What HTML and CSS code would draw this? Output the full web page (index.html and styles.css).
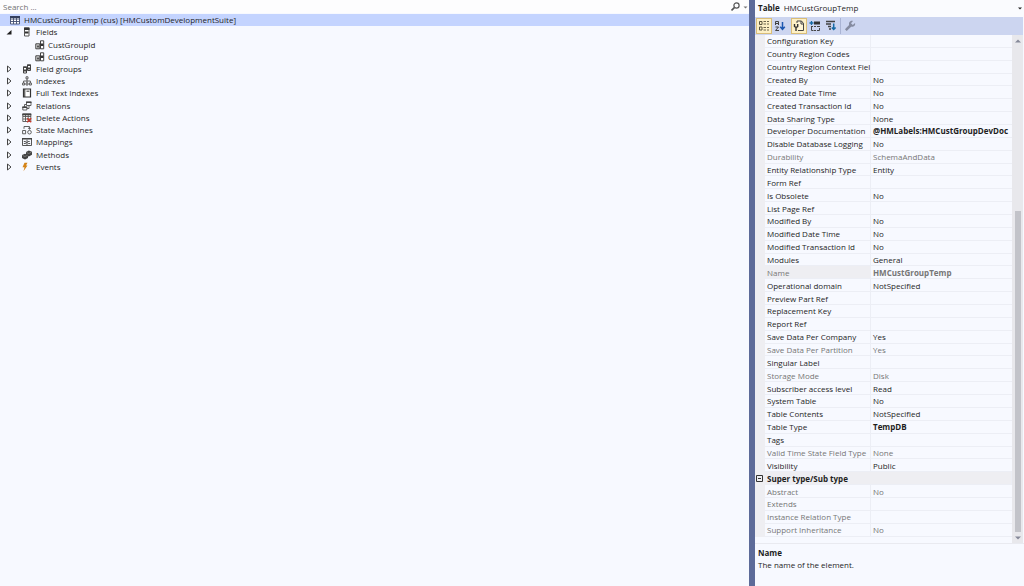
FILE: index.html
```html
<!DOCTYPE html>
<html lang="en">
<head>
<meta charset="utf-8">
<title>HMCustGroupTemp</title>
<link rel="stylesheet" href="styles.css">
</head>
<body>
<svg class="sprite" aria-hidden="true">
  <symbol id="closed" viewBox="0 0 10 12"><path d="M3.500 3v6L7 6z" fill="#fbfcff" stroke="#444" stroke-width="1"/></symbol>
  <symbol id="open" viewBox="0 0 10 12"><path d="M7.500 4v4.500H2.500z" fill="#1e1e1e"/></symbol>
  <symbol id="field" viewBox="0 0 10 10"><path d="M5.500 .8h3.200v8H5.500z" fill="#fff" stroke="#424242"/><path d="M5.500 3.500h3v2.500h-3z" fill="#333"/><path d="M.8 3.800h4v5h-4z" fill="#ddd" stroke="#424242"/><path d="M2 5.500h2v2H2z" fill="#555"/></symbol>
</svg>
<div class="workspace">
  <main class="designer">
    <div class="search">
      <input class="search-input" type="text" placeholder="Search ..." aria-label="Search">
      <button class="search-button" aria-label="Search options">
        <svg class="search-icon" viewBox="0 0 18 12"><circle cx="5.500" cy="4.500" r="2.600" fill="none" stroke="#555" stroke-width="1.200"/><path d="M3.600 6.400L.5 9.500" stroke="#555" stroke-width="1.600"/><path d="M12.500 5.500h4l-2 2z" fill="#777"/></svg>
      </button>
    </div>
    <div class="tree" role="tree" aria-label="Table elements">
      <div class="node root" role="treeitem" aria-level="1" aria-selected="true"><svg class="icon" viewBox="0 0 10 10"><path d="M.5 1.500h9v7.500h-9zM.5 4h9M.5 6.500h9M3.500 2v7M6.500 2v7" fill="#fff" stroke="#424e70" stroke-width=".9"/><path d="M0 1h10v2H0z" fill="#35405e"/></svg>HMCustGroupTemp (cus) [HMCustomDevelopmentSuite]</div>
      <div class="node" role="treeitem" aria-level="2"><button class="toggle" aria-label="Collapse Fields"><svg class="arrow"><use href="#open"/></svg></button><svg class="icon" viewBox="0 0 10 10"><path d="M2.500 1h4.500v8H2.500z" fill="#fff" stroke="#555"/><path d="M2 .5h5.500V3H2zM3 4.500h3.500V6.500H3z" fill="#333"/></svg>Fields</div>
      <div class="node leaf" role="treeitem" aria-level="3"><svg class="icon"><use href="#field"/></svg>CustGroupId</div>
      <div class="node leaf" role="treeitem" aria-level="3"><svg class="icon"><use href="#field"/></svg>CustGroup</div>
      <div class="node" role="treeitem" aria-level="2"><button class="toggle" aria-label="Expand Field groups"><svg class="arrow"><use href="#closed"/></svg></button><svg class="icon" viewBox="0 0 10 10"><path d="M5.500 1h3v5.500h-3zM1.500 3h3v6h-3z" fill="#fff" stroke="#424242"/><path d="M5 .5h4v1.500H5zM5 3.500h3v2H5zM1 2.500h4V4H1zM1.500 5.500h3v2h-3z" fill="#424242"/></svg>Field groups</div>
      <div class="node" role="treeitem" aria-level="2"><button class="toggle" aria-label="Expand Indexes"><svg class="arrow"><use href="#closed"/></svg></button><svg class="icon" viewBox="0 0 10 10"><path d="M4 .8h2v2H4zM.6 7h2v2h-2zM4 7h2v2H4zM7.400 7h2v2h-2zM5 3v4M1.600 7V5h6.800v2" fill="none" stroke="#505050" stroke-width=".9"/></svg>Indexes</div>
      <div class="node" role="treeitem" aria-level="2"><button class="toggle" aria-label="Expand Full Text Indexes"><svg class="arrow"><use href="#closed"/></svg></button><svg class="icon" viewBox="0 0 10 10"><path d="M1.500 1h7v8h-7z" fill="#fff" stroke="#333" stroke-width="1.200"/><path d="M2.800 1v8M4.500 3.200h2.800" stroke="#333"/></svg>Full Text Indexes</div>
      <div class="node" role="treeitem" aria-level="2"><button class="toggle" aria-label="Expand Relations"><svg class="arrow"><use href="#closed"/></svg></button><svg class="icon" viewBox="0 0 10 10"><path d="M4.500 1.200h4.500v3.300H4.500zM.8 6h4v3h-4zM2.500 6V3.500h2M7 4.500v3H5" fill="none" stroke="#505050" stroke-width=".9"/><path d="M4 .6h5.500v1.500H4zM.3 5.500h5V7h-5z" fill="#424242"/></svg>Relations</div>
      <div class="node" role="treeitem" aria-level="2"><button class="toggle" aria-label="Expand Delete Actions"><svg class="arrow"><use href="#closed"/></svg></button><svg class="icon" viewBox="0 0 10 10"><path d="M.8 1h8v7.500h-8zM1 3.500h8M1 6h8M3.500 1v7.500M6.200 1v7.500" fill="#fff" stroke="#555" stroke-width=".9"/><path d="M.3.5h9v1.800h-9z" fill="#424242"/><path d="M5.200 5.200l4 4M9.200 5.200l-4 4" stroke="#c8382b" stroke-width="1.300"/></svg>Delete Actions</div>
      <div class="node" role="treeitem" aria-level="2"><button class="toggle" aria-label="Expand State Machines"><svg class="arrow"><use href="#closed"/></svg></button><svg class="icon" viewBox="0 0 10 10"><path d="M.6 5.500h3v3.300h-3zM2 3.800V1.500h5.500v2.500M6 2.800l1.500 1.400L9 2.800" fill="none" stroke="#505050" stroke-width=".9"/><circle cx="7.500" cy="7.200" r="1.800" fill="none" stroke="#505050" stroke-width=".9"/></svg>State Machines</div>
      <div class="node" role="treeitem" aria-level="2"><button class="toggle" aria-label="Expand Mappings"><svg class="arrow"><use href="#closed"/></svg></button><svg class="icon" viewBox="0 0 10 10"><path d="M.5 1.500h9v7h-9zM5 1.500v7M1.800 4.500h2M1.800 6.500h1.500M6.200 4.500h1.500M6.200 6.500h2M3 6.500l3.500-2" fill="none" stroke="#444" stroke-width=".9"/><path d="M0 1h4.500v1.500H0zM5.500 1H10v1.500H5.500z" fill="#424242"/></svg>Mappings</div>
      <div class="node" role="treeitem" aria-level="2"><button class="toggle" aria-label="Expand Methods"><svg class="arrow"><use href="#closed"/></svg></button><svg class="icon" viewBox="0 0 10 10"><path d="M6.800.5L10 1.800v3L6.800 6.500 4 5V2zM3 3.800L6 5v3L3 9.500 0 8V5z" fill="#424242"/><path d="M4.500 2.500l2.300 1L9.500 2M.6 5.500L3 6.500 5.500 5.300" fill="none" stroke="#aaa" stroke-width=".5"/></svg>Methods</div>
      <div class="node" role="treeitem" aria-level="2"><button class="toggle" aria-label="Expand Events"><svg class="arrow"><use href="#closed"/></svg></button><svg class="icon" viewBox="0 0 10 10"><path d="M2.500.8h3L4 3.500h1.500L1.500 9.300l1-4H.5z" fill="#d48316"/></svg>Events</div>
    </div>
  </main>
  <div class="splitter" role="separator" aria-orientation="vertical"></div>
  <aside class="properties">
    <header class="object"><strong>Table</strong><span class="object-name">HMCustGroupTemp</span><button class="object-menu" aria-label="Choose object"><svg class="caret" viewBox="0 0 6 6"><path d="M1 2.500h4l-2 2z" fill="#222"/></svg></button></header>
    <div class="toolbar" role="toolbar" aria-label="Properties">
      <button class="tool active" aria-label="Categorized"><svg class="tool-icon" viewBox="0 0 12 12"><path d="M1.500 1.500h2.500v3H1.500zM1.500 7h2.500v3H1.500z" fill="none" stroke="#5b553f"/><path d="M5.500 1.500H8M9 1.500h2M5.500 4H8M9 4h2M5.500 7.500H8M9 7.500h2M5.500 10H8M9 10h2" stroke="#6b644c"/></svg></button>
      <button class="tool" aria-label="Alphabetical"><svg class="tool-icon" viewBox="0 0 12 12"><path d="M1.500 5V1.500h3V5M1.500 3.500h3M1.500 7h3L1.500 10.500h3.500" fill="none" stroke="#424242"/><path d="M8.500 2v7M6.200 6.800L8.500 9.300l2.300-2.500" fill="none" stroke="#1c57b0" stroke-width="1.500"/></svg></button>
      <button class="tool active spaced" aria-label="Properties"><svg class="tool-icon" viewBox="0 0 12 12"><path d="M4 3V1h4.500L10.500 3.500V10.500H5" fill="#fff5d5" stroke="#424242"/><path d="M8 1v3h3" fill="none" stroke="#424242"/><path d="M1.500 4v2.500l1.500 1L4.700 6.500V4M3 7v4" fill="none" stroke="#333" stroke-width="1.400"/></svg></button>
      <button class="tool" aria-label="Group by"><svg class="tool-icon" viewBox="0 0 12 12"><path d="M5 1.500h6v3H5z" fill="#333"/><path d="M2.500 1v4M.5 3h4" fill="none" stroke="#176aa5" stroke-width="1.300"/><path d="M2 6.500h2M5 6.500h2M8 6.500h3M2.500 7v3.500h2M5 10.500h2M8 10.500h2.500V8" fill="none" stroke="#444"/></svg></button>
      <button class="tool" aria-label="Sort"><svg class="tool-icon" viewBox="0 0 12 12"><path d="M1 1.500h9M1 4h5M3 6.500h3M4 9h2" stroke="#424242" stroke-width="1.300"/><path d="M8.700 3.500v6M6.800 7.500l1.900 2 1.900-2" fill="none" stroke="#176aa5" stroke-width="1.500"/></svg></button>
      <button class="tool wrench" aria-label="Property pages"><svg class="tool-icon" viewBox="0 0 12 12"><path d="M1.800 10.200L6.500 5.500" stroke="#858ba0" stroke-width="2.500"/><path d="M11 3L8.800 5 7 3.300l2-2.300C6 .2 4 3 5.500 5.800 8 8.200 12 6 11 3z" fill="#858ba0"/></svg></button>
    </div>
    <div class="grid-area">
      <div class="grid-body">
      <table class="grid">
        <colgroup><col class="gutter-col"><col class="name-col"><col></colgroup>
        <tbody>
          <tr><td></td><th>Configuration Key</th><td></td></tr>
          <tr><td></td><th>Country Region Codes</th><td></td></tr>
          <tr><td></td><th>Country Region Context Field</th><td></td></tr>
          <tr><td></td><th>Created By</th><td>No</td></tr>
          <tr><td></td><th>Created Date Time</th><td>No</td></tr>
          <tr><td></td><th>Created Transaction Id</th><td>No</td></tr>
          <tr><td></td><th>Data Sharing Type</th><td>None</td></tr>
          <tr class="changed"><td></td><th>Developer Documentation</th><td>@HMLabels:HMCustGroupDevDoc</td></tr>
          <tr><td></td><th>Disable Database Logging</th><td>No</td></tr>
          <tr class="readonly"><td></td><th>Durability</th><td>SchemaAndData</td></tr>
          <tr><td></td><th>Entity Relationship Type</th><td>Entity</td></tr>
          <tr><td></td><th>Form Ref</th><td></td></tr>
          <tr><td></td><th>Is Obsolete</th><td>No</td></tr>
          <tr><td></td><th>List Page Ref</th><td></td></tr>
          <tr><td></td><th>Modified By</th><td>No</td></tr>
          <tr><td></td><th>Modified Date Time</th><td>No</td></tr>
          <tr><td></td><th>Modified Transaction Id</th><td>No</td></tr>
          <tr><td></td><th>Modules</th><td>General</td></tr>
          <tr class="readonly changed selected"><td></td><th>Name</th><td>HMCustGroupTemp</td></tr>
          <tr><td></td><th>Operational domain</th><td>NotSpecified</td></tr>
          <tr><td></td><th>Preview Part Ref</th><td></td></tr>
          <tr><td></td><th>Replacement Key</th><td></td></tr>
          <tr><td></td><th>Report Ref</th><td></td></tr>
          <tr><td></td><th>Save Data Per Company</th><td>Yes</td></tr>
          <tr class="readonly"><td></td><th>Save Data Per Partition</th><td>Yes</td></tr>
          <tr><td></td><th>Singular Label</th><td></td></tr>
          <tr class="readonly"><td></td><th>Storage Mode</th><td>Disk</td></tr>
          <tr><td></td><th>Subscriber access level</th><td>Read</td></tr>
          <tr><td></td><th>System Table</th><td>No</td></tr>
          <tr><td></td><th>Table Contents</th><td>NotSpecified</td></tr>
          <tr class="changed"><td></td><th>Table Type</th><td>TempDB</td></tr>
          <tr><td></td><th>Tags</th><td></td></tr>
          <tr class="readonly"><td></td><th>Valid Time State Field Type</th><td>None</td></tr>
          <tr><td></td><th>Visibility</th><td>Public</td></tr>
          <tr class="category"><td><button class="collapse" aria-label="Collapse Super type/Sub type"><svg class="minus" viewBox="0 0 7 7"><path d="M.5.5h6v6h-6zM2 3.500h3" fill="none" stroke="#333"/></svg></button></td><th colspan="2">Super type/Sub type</th></tr>
          <tr class="readonly"><td></td><th>Abstract</th><td>No</td></tr>
          <tr class="readonly"><td></td><th>Extends</th><td></td></tr>
          <tr class="readonly"><td></td><th>Instance Relation Type</th><td></td></tr>
          <tr class="readonly"><td></td><th>Support Inheritance</th><td>No</td></tr>
        </tbody>
      </table>
      </div>
      <div class="scrollbar">
        <button class="scroll-step" aria-label="Scroll up"><svg class="scroll-arrow" viewBox="0 0 8 8"><path d="M1 5.500h6L4 2.500z" fill="#868999"/></svg></button>
        <div class="track"><div class="thumb"></div></div>
        <button class="scroll-step" aria-label="Scroll down"><svg class="scroll-arrow" viewBox="0 0 8 8"><path d="M1 2.500h6L4 5.500z" fill="#868999"/></svg></button>
      </div>
    </div>
    <footer class="description"><strong>Name</strong><span>The name of the element.</span></footer>
  </aside>
</div>
</body>
</html>
```
FILE: styles.css
```css
* { box-sizing: border-box; }
body { margin: 0; font: 8px/12px "Open Sans", "Noto Sans", sans-serif; color: #1e1e1e; background: #f7f9fe; }
button { border: 0; padding: 0; margin: 0; background: none; font: inherit; color: inherit; display: flex; align-items: center; justify-content: center; }
svg { display: block; flex: none; }
.sprite { position: absolute; width: 0; height: 0; }
.workspace { display: grid; grid-template-columns: minmax(0, 1fr) 6px 269px; min-height: 100vh; }
.designer { background: #f7f9ff; }
.search { display: flex; height: 13px; background: #fdfdfe; }
.search-input { flex: 1; min-width: 0; border: 0; padding: 0 3px; background: none; font: inherit; color: #1e1e1e; outline: 0; }
.search-input::placeholder { color: #717171; opacity: 1; }
.search-icon { width: 18px; height: 12px; }
.tree { display: grid; grid-auto-rows: 1fr; min-height: 160px; padding-top: 1px; }
.node { display: flex; align-items: center; padding-left: 4px; white-space: nowrap; }
.root { padding-left: 10px; background: #c4d4ff; }
.leaf { padding-left: 35px; }
.icon { width: 10px; height: 10px; margin-right: 4px; }
.leaf .icon { margin-right: 3px; }
.toggle { margin-right: 8px; }
.arrow { width: 10px; height: 12px; }
.splitter { background: #5d6b99; }
.properties { display: flex; flex-direction: column; min-width: 0; background: #f7f9ff; }
.object { display: flex; align-items: center; gap: 4px; height: 17px; padding: 0 1px 2px 3px; background: #fafbfe; }
.object-name { flex: 1; }
.caret { width: 6px; height: 6px; }
.toolbar { display: flex; align-items: center; height: 18px; margin-right: 1px; padding: 0 0 1px 1px; background: #ccd5f0; }
.tool { width: 16px; height: 16px; }
.tool.active { background: #fdf0c5; border: 1px solid #d9bd78; }
.tool-icon { width: 12px; height: 12px; }
.spaced { margin-left: 3px; }
.wrench { margin-left: 1px; padding-left: 1px; border-left: 1px solid #aab4d4; width: 18px; }
.grid-area { display: flex; padding-right: 1px; border-bottom: 1px solid #e9eaf0; }
.grid-body { flex: 1; min-width: 0; padding-bottom: 6px; }
.grid { width: 100%; table-layout: fixed; border-collapse: separate; border-spacing: 0; height: 502px; }
.gutter-col { width: 10px; }
.name-col { width: 106px; }
.grid td, .grid th { padding: 0 0 0 2px; line-height: 11px; border-bottom: 1px solid #eceef5; font-weight: 400; text-align: left; white-space: nowrap; overflow: hidden; }
.grid th { border-right: 1px solid #eceef5; }
.grid td:first-child { padding: 0; background: #eeeef2; border-color: #eeeef2; }
.grid .readonly { color: #767676; }
.grid .changed td { font-weight: 700; }
.grid .selected th { background: #eeeef2; }
.grid .category th { background: #eeeef2; font-weight: 700; }
.minus { width: 7px; height: 7px; }
.collapse { margin-left: 1px; }
.scrollbar { display: flex; flex-direction: column; width: 11px; background: #e8e8ec; }
.scroll-step { height: 11px; }
.scroll-arrow { width: 8px; height: 8px; }
.track { flex: 1; display: flex; flex-direction: column; justify-content: flex-end; align-items: center; }
.thumb { width: 6px; height: 66%; background: #c2c3c9; }
.description { display: flex; flex-direction: column; padding: 3px; }
```
